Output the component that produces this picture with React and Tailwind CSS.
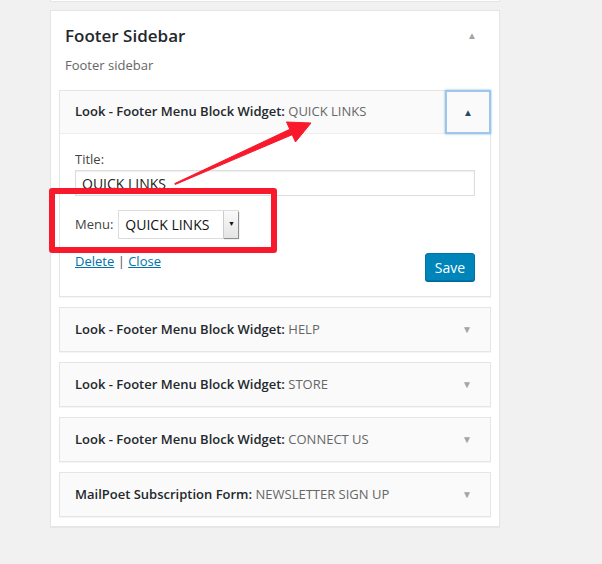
import React from "react";

const font = { fontFamily: '"Open Sans", "Liberation Sans", sans-serif' };

const ClosedWidget = ({ name, title }) => (
  <div className="border border-[#e5e5e5] bg-[#fafafa] shadow-[0_1px_1px_rgba(0,0,0,0.04)]">
    <div className="h-[43px] flex items-center justify-between pl-[15px] pr-[18px]">
      <span className="text-[13px] font-semibold text-[#23282d]">
        {name}: <span className="font-normal text-[#666]">{title}</span>
      </span>
      <span className="text-[10px] text-[#a0a5aa]">▼</span>
    </div>
  </div>
);

const App = () => {
  return (
    <div className="relative w-[602px] h-[564px] bg-[#f1f1f1] overflow-hidden" style={font}>
      {/* bottom edge of the previous sidebar */}
      <div className="ml-[50px] w-[450px] h-[2px] bg-white border border-t-0 border-[#e5e5e5]" />

      <div className="ml-[50px] mt-[8px] w-[450px] bg-white border border-[#e5e5e5] shadow-[0_1px_1px_rgba(0,0,0,0.04)] pb-[9px]">
        <div className="relative px-[14px] pt-[13px] pb-[16px]">
          <h2 className="text-[17px] leading-[24px] font-semibold text-[#23282d]">Footer Sidebar</h2>
          <p className="mt-[8px] text-[13px] leading-[18px] text-[#666]">Footer sidebar</p>
          <span className="absolute right-[22px] top-[17px] text-[10px] text-[#a0a5aa]">▲</span>
        </div>

        <div className="px-[8px] flex flex-col gap-[10px]">
          {/* open widget */}
          <div className="border border-[#e5e5e5] bg-white shadow-[0_1px_1px_rgba(0,0,0,0.04)]">
            <div className="h-[43px] flex items-stretch justify-between bg-[#fafafa] border-b border-[#eee]">
              <div className="flex items-center pl-[15px] text-[13px] font-semibold text-[#23282d]">
                Look - Footer Menu Block Widget:&nbsp;<span className="font-normal text-[#666]">QUICK LINKS</span>
              </div>
              <div className="w-[46px] -mt-px -mr-px -mb-px border-2 border-[#9cc6ea] shadow-[0_0_2px_rgba(30,140,190,0.6)] flex items-center justify-center">
                <span className="text-[10px] text-[#1f4a6b]">▲</span>
              </div>
            </div>
            <div className="px-[15px] pt-[15px] pb-[15px]">
              <div className="text-[13px] leading-[20px] text-[#444]">Title:</div>
              <div className="mt-[1px] h-[26px] border border-[#ddd] shadow-[inset_0_1px_2px_rgba(0,0,0,0.07)] flex items-center px-[6px] text-[14px] text-[#222]">
                QUICK LINKS
              </div>
              <div className="mt-[14px] flex items-center gap-[5px]">
                <span className="text-[13px] text-[#444]">Menu:</span>
                <div className="w-[121px] h-[29px] border border-[#ddd] bg-white flex items-stretch">
                  <div className="flex-1 flex items-center pl-[6px] text-[14px] text-[#111]">QUICK LINKS</div>
                  <div className="w-[15px] bg-gradient-to-b from-[#fafafa] to-[#e4e4e4] border-l border-[#ccc] shadow-[1px_1px_1px_rgba(0,0,0,0.35)] flex items-center justify-center">
                    <span className="text-[7px] text-[#111]">▼</span>
                  </div>
                </div>
              </div>
              <div className="mt-[12px] flex justify-between items-start">
                <div className="text-[13px] leading-[20px] text-[#555]">
                  <a className="text-[#0073aa] underline">Delete</a> | <a className="text-[#0073aa] underline">Close</a>
                </div>
                <button className="mt-[2px] h-[28px] w-[50px] rounded-[3px] bg-[#0085ba] border border-[#0073aa] shadow-[0_1px_0_#006799] text-white text-[14px]">
                  Save
                </button>
              </div>
            </div>
          </div>

          <ClosedWidget name="Look - Footer Menu Block Widget" title="HELP" />
          <ClosedWidget name="Look - Footer Menu Block Widget" title="STORE" />
          <ClosedWidget name="Look - Footer Menu Block Widget" title="CONNECT US" />
          <ClosedWidget name="MailPoet Subscription Form" title="NEWSLETTER SIGN UP" />
        </div>
      </div>

      {/* annotation: red box */}
      <div className="absolute left-[49px] top-[188px] w-[228px] h-[65px] border-[6px] border-[#f81a2c] rounded-[3px]" />

      {/* annotation: arrow */}
      <svg className="absolute left-0 top-0 pointer-events-none" width="602" height="564">
        <polygon
          points="174.8,183.5 289.8,129.3 286.5,122 311,123 295.5,142 292.2,134.7 175.2,184.5"
          fill="#f81a2c"
          stroke="#f81a2c"
          strokeWidth="1"
          strokeLinejoin="round"
        />
      </svg>
    </div>
  );
};

export default App;
